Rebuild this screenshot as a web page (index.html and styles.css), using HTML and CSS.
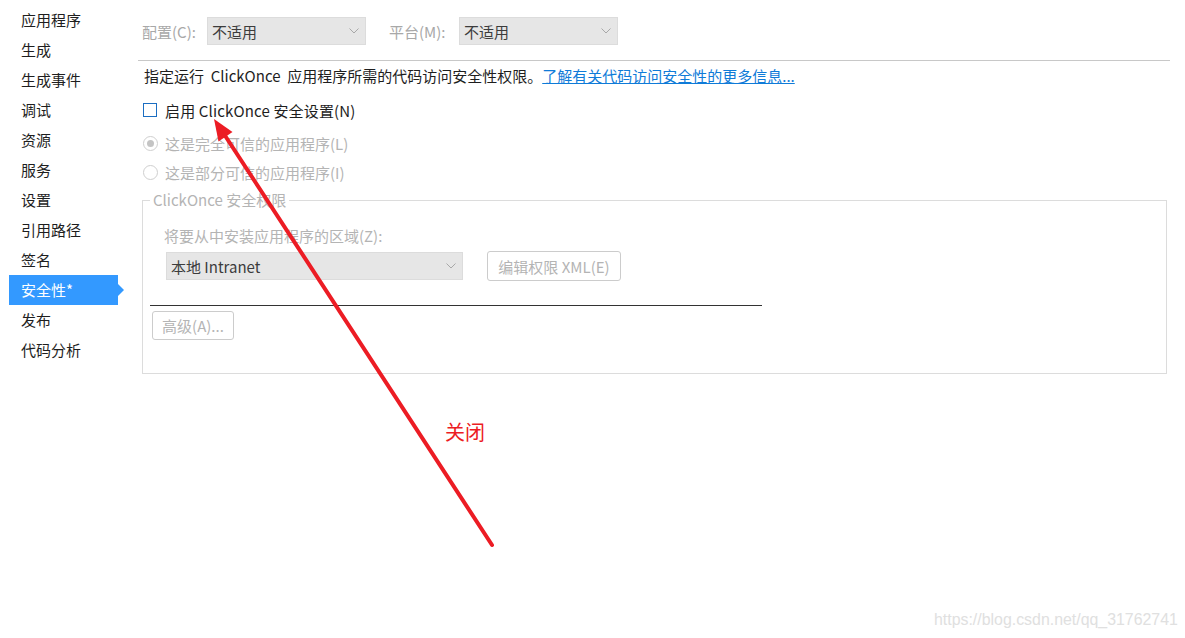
FILE: index.html
```html
<!DOCTYPE html>
<html lang="zh-CN">
<head>
<meta charset="utf-8">
<link rel="stylesheet" href="styles.css">
</head>
<body>
<div class="page">
  <nav class="sidebar">
    <div class="nav-item">应用程序</div>
    <div class="nav-item">生成</div>
    <div class="nav-item">生成事件</div>
    <div class="nav-item">调试</div>
    <div class="nav-item">资源</div>
    <div class="nav-item">服务</div>
    <div class="nav-item">设置</div>
    <div class="nav-item">引用路径</div>
    <div class="nav-item">签名</div>
    <div class="nav-item active">安全性*</div>
    <div class="nav-item">发布</div>
    <div class="nav-item">代码分析</div>
  </nav>
  <main class="content">
    <div class="toolbar">
      <span class="tb-label">配置(C):</span>
      <div class="select sel-top"><span>不适用</span><svg class="chev" width="10" height="6" viewBox="0 0 10 6"><polyline points="0.5,0.5 5,5 9.5,0.5" fill="none" stroke="#a8a8a8" stroke-width="1"/></svg></div>
      <span class="tb-label tb-gap">平台(M):</span>
      <div class="select sel-top"><span>不适用</span><svg class="chev" width="10" height="6" viewBox="0 0 10 6"><polyline points="0.5,0.5 5,5 9.5,0.5" fill="none" stroke="#a8a8a8" stroke-width="1"/></svg></div>
    </div>
    <div class="rule"></div>
    <p class="desc">指定运行&nbsp; ClickOnce&nbsp; 应用程序所需的代码访问安全性权限。<a class="link" href="#">了解有关代码访问安全性的更多信息...</a></p>
    <div class="check-row">
      <span class="checkbox"></span>
      <span class="check-label">启用 ClickOnce 安全设置(N)</span>
    </div>
    <div class="radio-row r1">
      <span class="radio checked"></span>
      <span class="disabled">这是完全可信的应用程序(L)</span>
    </div>
    <div class="radio-row r2">
      <span class="radio"></span>
      <span class="disabled">这是部分可信的应用程序(I)</span>
    </div>
    <div class="group">
      <span class="legend">ClickOnce 安全权限</span>
      <div class="zone-label disabled">将要从中安装应用程序的区域(Z):</div>
      <div class="zone-row">
        <div class="select sel-zone"><span>本地 Intranet</span><svg class="chev" width="10" height="6" viewBox="0 0 10 6"><polyline points="0.5,0.5 5,5 9.5,0.5" fill="none" stroke="#a8a8a8" stroke-width="1"/></svg></div>
        <div class="btn btn-xml">编辑权限 XML(E)</div>
      </div>
      <div class="dark-rule"></div>
      <div class="btn btn-adv">高级(A)...</div>
    </div>
  </main>
</div>

<svg class="annot" width="1185" height="638" viewBox="0 0 1185 638">
  <line x1="492" y1="545" x2="222" y2="131" stroke="#ec1c24" stroke-width="4" stroke-linecap="round"/>
  <polygon points="214,119 232.5,132 218.5,141.5" fill="#ec1c24"/>
</svg>
<div class="note">关闭</div>
<div class="watermark">https://blog.csdn.net/qq_31762741</div>
</body>
</html>
```
FILE: styles.css
```css
html, body {
  margin: 0;
  padding: 0;
  background: #ffffff;
}
body {
  font-family: "Noto Sans CJK SC", "Noto Sans", sans-serif;
  font-size: 15px;
  color: #1e1e1e;
  width: 1185px;
  height: 638px;
  position: relative;
  overflow: hidden;
}
.page {
  display: flex;
}
.sidebar {
  width: 129px;
  padding: 5px 0 0 9px;
  box-sizing: border-box;
  flex: none;
}
.nav-item {
  height: 30px;
  line-height: 30px;
  padding-left: 12px;
  width: 109px;
  box-sizing: border-box;
  position: relative;
  color: #1e1e1e;
}
.nav-item.active {
  background: #3399ff;
  color: #ffffff;
}
.nav-item.active::after {
  content: "";
  position: absolute;
  right: -6px;
  top: 9px;
  border-top: 6px solid transparent;
  border-bottom: 6px solid transparent;
  border-left: 6px solid #3399ff;
}
.content {
  width: 1032px;
  margin-left: 9px;
  padding-top: 16px;
}
.toolbar {
  display: flex;
  align-items: center;
  height: 30px;
  padding-left: 4px;
}
.tb-label {
  color: #a8a8a8;
  width: 65px;
}
.tb-gap {
  margin-left: 23px;
  width: 70px;
}
.select {
  height: 28px;
  box-sizing: border-box;
  background: #e6e6e6;
  border: 1px solid #dcdcdc;
  display: flex;
  align-items: center;
  justify-content: space-between;
  padding: 0 6px 0 4px;
  color: #3c3c3c;
}
.sel-top {
  width: 159px;
}
.chev {
  display: block;
}
.rule {
  margin-top: 14px;
  height: 1px;
  background: #c8c8c8;
}
.desc {
  margin: 5px 0 0 6px;
  font-size: 15px;
  line-height: 20px;
  color: #1e1e1e;
}
.link {
  color: #0f7bd8;
  text-decoration: underline;
}
.check-row, .radio-row {
  display: flex;
  align-items: center;
  height: 22px;
  padding-left: 5px;
}
.check-row {
  margin-top: 13px;
}
.check-label {
  letter-spacing: 0.15px;
}
.r1 {
  margin-top: 11px;
}
.r2 {
  margin-top: 7px;
}
.checkbox {
  width: 14px;
  height: 14px;
  box-sizing: border-box;
  border: 1px solid #1b6ec2;
  margin-right: 8px;
}
.radio {
  width: 15px;
  height: 15px;
  box-sizing: border-box;
  border: 1px solid #cfcfcf;
  border-radius: 50%;
  margin-right: 7px;
  position: relative;
}
.radio.checked::after {
  content: "";
  position: absolute;
  left: 3px;
  top: 3px;
  width: 7px;
  height: 7px;
  border-radius: 50%;
  background: #c4c4c4;
}
.disabled {
  color: #b4b4b4;
}
.group {
  position: relative;
  margin: 17px 3px 0 4px;
  height: 174px;
  box-sizing: border-box;
  border: 1px solid #dcdcdc;
  padding: 25px 0 0 0;
}
.legend {
  position: absolute;
  left: 7px;
  top: -11px;
  padding: 0 3px;
  background: #ffffff;
  line-height: 20px;
  color: #b4b4b4;
}
.zone-label {
  line-height: 20px;
  padding-left: 21px;
}
.zone-row {
  display: flex;
  align-items: center;
  margin-top: 5px;
  padding-left: 23px;
  height: 30px;
}
.sel-zone {
  width: 297px;
}
.btn {
  box-sizing: border-box;
  border: 1px solid #cccccc;
  border-radius: 3px;
  color: #b4b4b4;
  display: flex;
  align-items: center;
  justify-content: center;
}
.btn-xml {
  width: 134px;
  height: 30px;
  margin-left: 24px;
}
.dark-rule {
  margin: 24px 0 0 7px;
  width: 612px;
  height: 1px;
  background: #333333;
}
.btn-adv {
  width: 82px;
  height: 29px;
  margin: 5px 0 0 9px;
}
.annot {
  position: absolute;
  left: 0;
  top: 0;
  pointer-events: none;
}
.note {
  position: absolute;
  left: 445px;
  top: 418px;
  font-size: 20px;
  line-height: 28px;
  color: #ec1c24;
}
.watermark {
  position: absolute;
  left: 934px;
  top: 610px;
  font-family: "Liberation Sans", Arial, sans-serif;
  font-size: 15.9px;
  line-height: 20px;
  color: #e0e0e0;
}
```
